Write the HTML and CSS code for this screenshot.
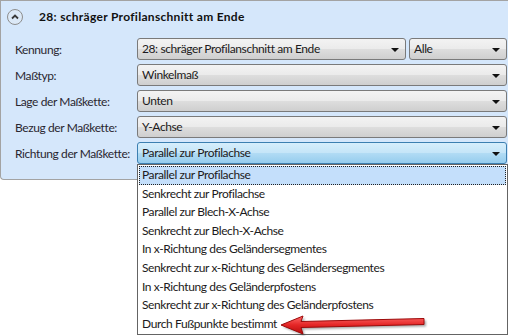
FILE: index.html
```html
<!DOCTYPE html>
<html lang="de">
<head>
  <meta charset="UTF-8" />
  <title>Maßkette</title>
  <link rel="stylesheet" href="styles.css">
</head>
<body>
  <div class="panel">
    <div class="panel-head">
      <span class="collapse">
        <svg width="16" height="16" viewBox="0 0 16 16"><circle cx="8" cy="8" r="7.5" fill="#dce9f7" stroke="#8d8d8d"/><path d="M5 9.5 L8 6.5 L11 9.5" fill="none" stroke="#3a3a3a" stroke-width="1.8"/></svg>
      </span>
      <span class="title">28: schräger Profilanschnitt am Ende</span>
    </div>
    <div class="form">
      <div class="row">
        <label>Kennung:</label>
        <div class="combo wide">28: schräger Profilanschnitt am Ende<i></i></div>
        <div class="combo small">Alle<i></i></div>
      </div>
      <div class="row">
        <label>Maßtyp:</label>
        <div class="combo">Winkelmaß<i></i></div>
      </div>
      <div class="row">
        <label>Lage der Maßkette:</label>
        <div class="combo">Unten<i></i></div>
      </div>
      <div class="row">
        <label>Bezug der Maßkette:</label>
        <div class="combo">Y-Achse<i></i></div>
      </div>
      <div class="row">
        <label>Richtung der Maßkette:</label>
        <div class="combo open">Parallel zur Profilachse<i></i></div>
      </div>
    </div>
  </div>

  <ul class="droplist">
    <li class="selected">Parallel zur Profilachse</li>
    <li>Senkrecht zur Profilachse</li>
    <li>Parallel zur Blech-X-Achse</li>
    <li>Senkrecht zur Blech-X-Achse</li>
    <li>In x-Richtung des Geländersegmentes</li>
    <li>Senkrecht zur x-Richtung des Geländersegmentes</li>
    <li>In x-Richtung des Geländerpfostens</li>
    <li>Senkrecht zur x-Richtung des Geländerpfostens</li>
    <li>Durch Fußpunkte bestimmt</li>
  </ul>

  <svg class="arrow" width="156" height="26" viewBox="0 0 156 26">
    <defs>
      <linearGradient id="red" x1="0" y1="0" x2="0" y2="1">
        <stop offset="0" stop-color="#ff6a6a"/>
        <stop offset="0.5" stop-color="#e42626"/>
        <stop offset="1" stop-color="#b80c0c"/>
      </linearGradient>
      <filter id="shadow" x="-10%" y="-30%" width="120%" height="160%">
        <feGaussianBlur stdDeviation="1.2"/>
      </filter>
    </defs>
    <path d="M7 15 L29 6 L27 11.5 L150 8.5 L150 14.5 L27 17.5 L29 24 Z" fill="#000" opacity="0.35" filter="url(#shadow)"/>
    <path d="M5 13 L27 4 L25 9.5 L148 6.5 L148 12.5 L25 15.5 L27 22 Z" fill="url(#red)" stroke="#9c0a0a" stroke-width="1" stroke-linejoin="round"/>
  </svg>
</body>
</html>
```

FILE: styles.css
```css
* {
  box-sizing: border-box;
}
html, body {
  margin: 0;
  overflow: hidden;
}
body {
  width: 508px;
  height: 336px;
  position: relative;
  background: #fff;
  font-family: "Lato", "Noto Sans", sans-serif;
  font-size: 12px;
  letter-spacing: -0.4px;
  color: #2a2630;
}
.panel {
  width: 530px;
  height: 180px;
  background: #d5e7fb;
  border-top: 1px solid #a3a3a3;
  border-left: 1px solid #a3a3a3;
  border-bottom: 1px solid #a3a3a3;
  border-bottom-left-radius: 4px;
}
.panel-head {
  height: 37px;
  display: flex;
  align-items: center;
  padding: 0 0 6px 6px;
  gap: 16px;
}
.collapse {
  display: flex;
}
.title {
  font-weight: bold;
  letter-spacing: 0.3px;
  color: #111;
}
.form {
  display: flex;
  flex-direction: column;
  gap: 4px;
  width: 506px;
}
.row {
  display: flex;
  align-items: center;
  gap: 3px;
  height: 22px;
}
.row label {
  width: 133px;
  padding-left: 14px;
  flex-shrink: 0;
  white-space: nowrap;
}
.combo {
  flex: 1;
  height: 22px;
  position: relative;
  border: 1px solid #7a7a7a;
  border-radius: 3px;
  background: linear-gradient(#f3f3f3, #ebebeb 48%, #dddddd 52%, #cfcfcf);
  padding: 2px 0 0 4px;
  color: #1c1a20;
  white-space: nowrap;
}
.combo.wide {
  flex: 0 0 269px;
}
.combo.small {
  flex: 0 0 98px;
}
.combo.open {
  border-color: #3c7fb1;
  background: linear-gradient(#d6eefc, #c5e5f8 48%, #b1dbf4 52%, #96cdee);
}
.combo i {
  position: absolute;
  right: 6px;
  top: 9px;
  border-left: 4px solid transparent;
  border-right: 4px solid transparent;
  border-top: 4px solid #111;
}
.droplist {
  position: absolute;
  left: 137px;
  top: 164px;
  width: 371px;
  height: 171px;
  margin: 0;
  padding: 1px;
  list-style: none;
  background: #fff;
  border: 1px solid #646464;
}
.droplist li {
  height: 18.6px;
  line-height: 18px;
  padding-left: 3px;
  white-space: nowrap;
  color: #1c1a20;
}
.droplist li.selected {
  background: #c4dffb;
  outline: 1px dotted #222;
  outline-offset: -1px;
}
.arrow {
  position: absolute;
  left: 276px;
  top: 312px;
}
```
